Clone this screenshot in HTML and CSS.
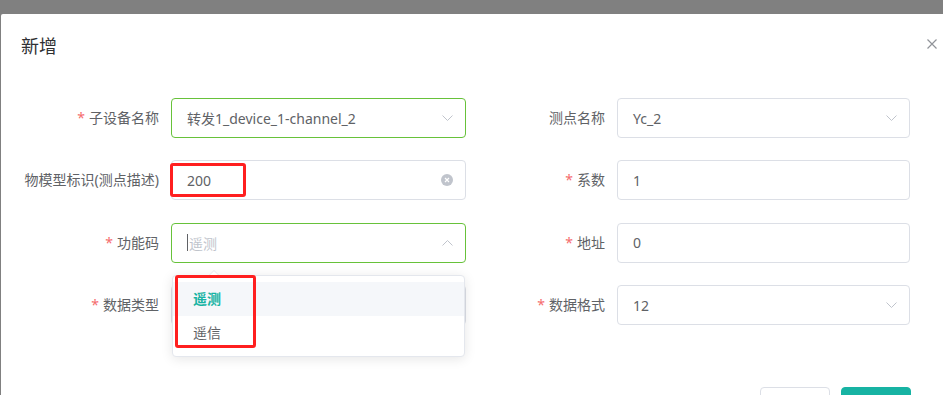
FILE: index.html
```html
<!DOCTYPE html>
<html>
    <head>
        <meta charset="utf-8" />
        <title>新增</title>
        <link rel="stylesheet" href="styles.css">
    </head>
    <body>
        <!-- 弹窗 -->
        <div class="dialog">
            <div class="dialog-header">
                <span class="dialog-title">新增</span>
                <button type="button" class="dialog-close" aria-label="关闭">
                    <svg width="10" height="10" viewBox="0 0 10 10"><path d="M0.5 0.5L9.5 9.5M9.5 0.5L0.5 9.5" stroke="#909399" stroke-width="1.2" fill="none"/></svg>
                </button>
            </div>

            <div class="dialog-body">
                <form class="form-grid">
                    <!-- 第一行 -->
                    <div class="form-item">
                        <label class="form-label"><span class="required">*</span>子设备名称</label>
                        <div class="control is-success">
                            <span class="control-text">转发1_device_1-channel_2</span>
                            <svg class="suffix" width="11" height="6" viewBox="0 0 11 6"><path d="M0.5 0.5L5.5 5.5L10.5 0.5" stroke="#c0c4cc" fill="none"/></svg>
                        </div>
                    </div>
                    <div class="form-item">
                        <label class="form-label">测点名称</label>
                        <div class="control">
                            <span class="control-text">Yc_2</span>
                            <svg class="suffix" width="11" height="6" viewBox="0 0 11 6"><path d="M0.5 0.5L5.5 5.5L10.5 0.5" stroke="#c0c4cc" fill="none"/></svg>
                        </div>
                    </div>

                    <!-- 第二行 -->
                    <div class="form-item">
                        <label class="form-label">物模型标识(测点描述)</label>
                        <div class="control">
                            <span class="control-text">200</span>
                            <span class="clear-icon">
                                <svg width="12" height="12" viewBox="0 0 12 12"><circle cx="6" cy="6" r="6" fill="#c0c4cc"/><path d="M4 4L8 8M8 4L4 8" stroke="#fff" stroke-width="1.2"/></svg>
                            </span>
                            <span class="mark mark-value"></span>
                        </div>
                    </div>
                    <div class="form-item">
                        <label class="form-label"><span class="required">*</span>系数</label>
                        <div class="control">
                            <span class="control-text">1</span>
                        </div>
                    </div>

                    <!-- 第三行 -->
                    <div class="form-item">
                        <label class="form-label"><span class="required">*</span>功能码</label>
                        <div class="control is-success">
                            <span class="caret"></span>
                            <span class="control-text placeholder">遥测</span>
                            <svg class="suffix" width="11" height="6" viewBox="0 0 11 6"><path d="M0.5 5.5L5.5 0.5L10.5 5.5" stroke="#c0c4cc" fill="none"/></svg>

                            <!-- 下拉选项 -->
                            <div class="dropdown">
                                <span class="dropdown-arrow"></span>
                                <ul class="dropdown-list">
                                    <li class="dropdown-item selected">遥测</li>
                                    <li class="dropdown-item">遥信</li>
                                </ul>
                            </div>
                            <span class="mark mark-options"></span>
                        </div>
                    </div>
                    <div class="form-item">
                        <label class="form-label"><span class="required">*</span>地址</label>
                        <div class="control">
                            <span class="control-text">0</span>
                        </div>
                    </div>

                    <!-- 第四行 -->
                    <div class="form-item">
                        <label class="form-label"><span class="required">*</span>数据类型</label>
                        <div class="control">
                            <span class="control-text"></span>
                        </div>
                    </div>
                    <div class="form-item">
                        <label class="form-label"><span class="required">*</span>数据格式</label>
                        <div class="control">
                            <span class="control-text">12</span>
                            <svg class="suffix" width="11" height="6" viewBox="0 0 11 6"><path d="M0.5 0.5L5.5 5.5L10.5 0.5" stroke="#c0c4cc" fill="none"/></svg>
                        </div>
                    </div>
                </form>
            </div>

            <!-- 底部按钮 -->
            <div class="dialog-footer">
                <button type="button" class="button cancel">取消</button>
                <button type="button" class="button confirm">确定</button>
            </div>
        </div>
    </body>
</html>
```

FILE: styles.css
```css
/* 遮罩背景 */
body {
    margin: 0;
    height: 395px;
    overflow: hidden;
    background-color: #808080;
    font-family: "Noto Sans", "Noto Sans CJK SC", sans-serif;
    font-size: 14px;
    color: #606266;
}

/* 弹窗主体 */
.dialog {
    width: 956px;
    margin: 14px 0 0 1px;
    background-color: #fff;
    border-radius: 2px;
}

.dialog-header {
    display: flex;
    justify-content: space-between;
    align-items: flex-start;
    padding: 20px 20px 10px;
}

.dialog-title {
    font-size: 18px;
    line-height: 24px;
    color: #303133;
}

.dialog-close {
    margin-top: 5px;
    padding: 0;
    border: none;
    background: none;
    line-height: 0;
    cursor: pointer;
}

.dialog-body {
    padding: 30px 20px 52px; /* 最后一行表单项的 22px 间距 */
}

/* 表单两列排列 */
.form-grid {
    display: grid;
    grid-template-columns: 445px 443px;
    column-gap: 1px;
    row-gap: 22.4px;
    margin: 0;
}

.form-item {
    display: flex;
}

.form-label {
    width: 150px;
    flex-shrink: 0;
    padding-right: 12px;
    box-sizing: border-box;
    text-align: right;
    line-height: 40px;
    white-space: nowrap;
}

.required {
    color: #f56c6c;
    margin-right: 4px;
}

/* 输入框与下拉框 */
.control {
    position: relative;
    flex: 1;
    display: flex;
    align-items: center;
    height: 40px;
    padding: 0 12px 0 15px;
    border: 1px solid #dcdfe6;
    border-radius: 4px;
    box-sizing: border-box;
}

.control.is-success {
    border-color: #67c23a;
}

.control-text {
    flex: 1;
    color: #606266;
    white-space: nowrap;
}

.control-text.placeholder {
    color: #c0c4cc;
}

.caret {
    width: 1px;
    height: 17px;
    margin-right: 1px;
    background-color: #606266;
}

.suffix {
    flex-shrink: 0;
}

.clear-icon {
    line-height: 0;
}

/* 下拉选项 */
.dropdown {
    position: absolute;
    top: calc(100% + 13px);
    left: 0;
    right: 0;
    background-color: #fff;
    border: 1px solid #e4e7ed;
    border-radius: 4px;
    box-shadow: 0 2px 12px 0 rgba(0, 0, 0, 0.1);
    z-index: 10;
}

.dropdown-arrow {
    position: absolute;
    top: -6px;
    left: 35px;
    width: 0;
    height: 0;
    border-left: 6px solid transparent;
    border-right: 6px solid transparent;
    border-bottom: 6px solid #e4e7ed;
}

.dropdown-arrow::after {
    content: "";
    position: absolute;
    top: 1px;
    left: -6px;
    border-left: 6px solid transparent;
    border-right: 6px solid transparent;
    border-bottom: 6px solid #fff;
}

.dropdown-list {
    list-style: none;
    margin: 0;
    padding: 6px 0;
}

.dropdown-item {
    height: 34px;
    line-height: 34px;
    padding: 0 20px;
    color: #606266;
}

.dropdown-item.selected {
    background-color: #f5f7fa;
    color: #17b3a3;
    font-weight: bold;
}

/* 红色标注框 */
.mark {
    position: absolute;
    border: 3px solid #ff1f1f;
    border-radius: 3px;
    z-index: 20;
}

.mark-value {
    top: 2px;
    left: -2px;
    width: 70px;
    height: 28px;
}

.mark-options {
    top: 51px;
    left: 3px;
    width: 75px;
    height: 67px;
}

/* 底部按钮 */
.dialog-footer {
    display: flex;
    justify-content: flex-end;
    gap: 11px;
    padding: 10px 46px 20px 20px;
}

.button {
    width: 70px;
    height: 40px;
    font-family: inherit;
    font-size: 14px;
    border-radius: 4px;
    cursor: pointer;
    box-sizing: border-box;
}

.button.cancel {
    border: 1px solid #dcdfe6;
    background-color: #fff;
    color: #606266;
}

.button.confirm {
    border: 1px solid #17b3a3;
    background-color: #17b3a3;
    color: #fff;
}
```
